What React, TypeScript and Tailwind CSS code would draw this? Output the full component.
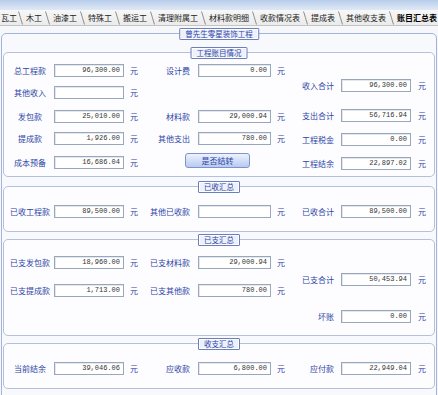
import type { ReactNode } from "react";

const TABS = ["木工", "油漆工", "特殊工", "搬运工", "清理附属工", "材料款明细", "收款情况表", "提成表", "其他收支表"];

function Sep() {
  return (
    <svg width="5" height="14" viewBox="0 0 5 14" className="shrink-0">
      <path d="M0.5 0.5 C1.5 3, 3 9, 4.5 13.5" stroke="#8d8d8d" strokeWidth="1" fill="none" />
    </svg>
  );
}

function Title({ children }: { children: ReactNode }) {
  return (
    <div className="absolute left-1/2 -translate-x-1/2 -top-[6px] h-[12px] px-[5px] flex items-center border border-[#6c7fbd] bg-[#eef1fb] shadow-[inset_0_0_0_1px_#ffffff] rounded-[1px] text-[7.5px] leading-none text-[#2d44a6] whitespace-nowrap">
      {children}
    </div>
  );
}

function Group({ title, className = "", children }: { title: string; className?: string; children: ReactNode }) {
  return (
    <div className={`relative border border-[#b5c0dc] rounded-[5px] bg-[#fdfdff] ${className}`}>
      <Title>{title}</Title>
      <div className="flex items-start">{children}</div>
    </div>
  );
}

type FieldProps = { label: string; value?: string; col: 1 | 2 | 3; className?: string };

// col 1: label centered, cols 2/3: label right-aligned
function Field({ label, value = "", col, className = "" }: FieldProps) {
  const labelCls =
    col === 1 ? "w-[44px] text-center" : col === 2 ? "w-[52px] text-right" : "w-[49px] text-right";
  const inputCls = col === 1 ? "ml-[2px] w-[70px]" : col === 2 ? "ml-[8px] w-[73px]" : "ml-[7px] w-[70px]";
  const unitCls = col === 3 ? "ml-[7px]" : "ml-[6px]";
  return (
    <div className={`flex items-center h-[13px] ${className}`}>
      <span className={`${labelCls} text-[8px] leading-none text-[#2d44a6] whitespace-nowrap`}>{label}</span>
      <div
        className={`${inputCls} h-[13px] bg-white border border-[#9aa6bb] shadow-[inset_1px_1px_0_#e3e7ee] flex items-center justify-end pr-[3px] font-['Liberation_Mono',monospace] text-[7px] leading-none text-[#333]`}
      >
        {value}
      </div>
      <span className={`${unitCls} text-[8px] leading-none text-[#2d44a6]`}>元</span>
    </div>
  );
}

export default function App() {
  return (
    <div className="w-[438px] h-[395px] overflow-hidden bg-[#f6f7fb] font-['Noto_Sans_CJK_SC','Noto_Sans',sans-serif]">
      {/* window caption strip */}
      <div className="h-[10px] bg-gradient-to-b from-[#b7ccea] to-[#dfe9f6]" />

      {/* sheet tabs */}
      <div className="h-[16px] flex items-center bg-gradient-to-b from-[#f7f7f7] to-[#ebebeb] border-b border-[#c4c4c4] text-[8px] leading-none text-[#222] whitespace-nowrap overflow-hidden">
        <span className="pl-[1px] pr-[1px]">瓦工</span>
        <Sep />
        {TABS.map((t) => (
          <div key={t} className="flex items-center">
            <span className="px-[3px]">{t}</span>
            <Sep />
          </div>
        ))}
        <span className="px-[3px] font-bold text-black">账目汇总表</span>
        <Sep />
      </div>

      {/* project panel */}
      <div className="relative mt-[7px] mx-[1px] border border-[#a4b3da] rounded-t-[5px] bg-[#f8f9fd] px-[1px] pt-[18px] h-[400px]">
        <Title>曾先生零星装饰工程</Title>

        <Group title="工程账目情况" className="pb-[6px]">
          <div className="w-[134px] pl-[4px] flex flex-col">
            <Field col={1} label="总工程款" value="96,300.00" className="mt-[11px]" />
            <Field col={1} label="其他收入" className="mt-[9px]" />
            <Field col={1} label="发包款" value="25,010.00" className="mt-[11px]" />
            <Field col={1} label="提成款" value="1,926.00" className="mt-[9px]" />
            <Field col={1} label="成本预备" value="16,686.04" className="mt-[11px]" />
          </div>
          <div className="w-[147px] flex flex-col">
            <Field col={2} label="设计费" value="0.00" className="mt-[11px]" />
            <Field col={2} label="材料款" value="29,000.94" className="mt-[33px]" />
            <Field col={2} label="其他支出" value="780.00" className="mt-[9px]" />
            <button className="ml-[47px] mt-[8px] w-[65px] h-[15px] rounded-[3px] border border-[#7d93c9] bg-gradient-to-b from-[#edf2fd] to-[#b8caf0] text-[8px] leading-none text-[#2d44a6]">
              是否结转
            </button>
          </div>
          <div className="flex flex-col">
            <Field col={3} label="收入合计" value="96,300.00" className="mt-[26px]" />
            <Field col={3} label="支出合计" value="56,716.94" className="mt-[17px]" />
            <Field col={3} label="工程税金" value="0.00" className="mt-[11px]" />
            <Field col={3} label="工程结余" value="22,897.02" className="mt-[11px]" />
          </div>
        </Group>

        <Group title="已收汇总" className="mt-[9px] pb-[13px]">
          <div className="w-[134px] pl-[4px]">
            <Field col={1} label="已收工程款" value="89,500.00" className="mt-[18px]" />
          </div>
          <div className="w-[147px]">
            <Field col={2} label="其他已收款" className="mt-[18px]" />
          </div>
          <div>
            <Field col={3} label="已收合计" value="89,500.00" className="mt-[18px]" />
          </div>
        </Group>

        <Group title="已支汇总" className="mt-[7px] pb-[12px]">
          <div className="w-[134px] pl-[4px] flex flex-col">
            <Field col={1} label="已支发包款" value="18,960.00" className="mt-[16px]" />
            <Field col={1} label="已支提成款" value="1,713.00" className="mt-[15px]" />
          </div>
          <div className="w-[147px] flex flex-col">
            <Field col={2} label="已支材料款" value="29,000.94" className="mt-[16px]" />
            <Field col={2} label="已支其他款" value="780.00" className="mt-[15px]" />
          </div>
          <div className="flex flex-col">
            <Field col={3} label="已支合计" value="50,453.94" className="mt-[33px]" />
            <Field col={3} label="坏账" value="0.00" className="mt-[24px]" />
          </div>
        </Group>

        <Group title="收支汇总" className="mt-[7px] pb-[13px]">
          <div className="w-[134px] pl-[4px]">
            <Field col={1} label="当前结余" value="39,046.06" className="mt-[18px]" />
          </div>
          <div className="w-[147px]">
            <Field col={2} label="应收款" value="6,800.00" className="mt-[18px]" />
          </div>
          <div>
            <Field col={3} label="应付款" value="22,949.04" className="mt-[18px]" />
          </div>
        </Group>
      </div>
    </div>
  );
}
